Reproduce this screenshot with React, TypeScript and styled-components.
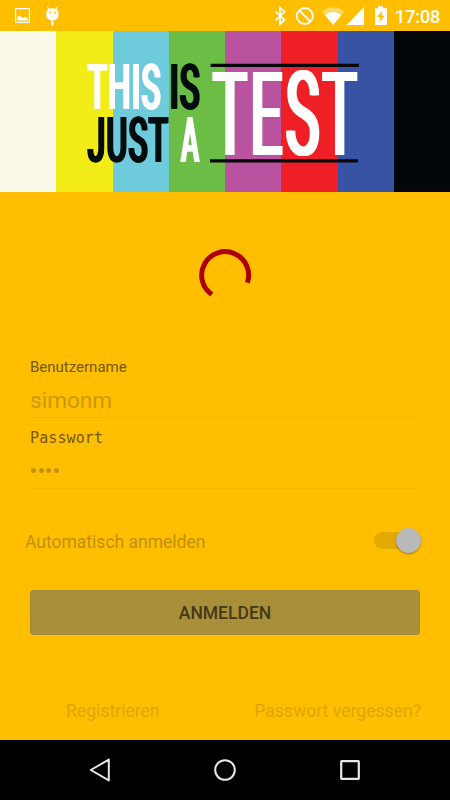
import React from "react";
import styled, { createGlobalStyle } from "styled-components";

const Global = createGlobalStyle`
  * { box-sizing: border-box; }
  body { margin: 0; background: #ffbf00; font-family: Roboto, sans-serif; }
`;

const Screen = styled.div`
  width: 450px;
  height: 800px;
  display: flex;
  flex-direction: column;
  background: #ffbf00;
  overflow: hidden;
`;

const StatusBar = styled.header`
  height: 31px;
  flex: none;
  display: flex;
  justify-content: space-between;

  svg { display: block; }
`;

const StatusGroup = styled.div`
  display: flex;
`;

const Clock = styled.span`
  width: 55px;
  padding-top: 1px;
  font-size: 18px;
  line-height: 31px;
  font-weight: 500;
  color: #fff;
  letter-spacing: -0.1px;
`;

const Banner = styled.div`
  position: relative;
  height: 161px;
  flex: none;
  display: flex;
`;

const Stripe = styled.div<{ $color: string }>`
  flex: 1;
  background: ${(p) => p.$color};
`;

const Lettering = styled.svg`
  position: absolute;
  inset: 0;
  font-family: Roboto, sans-serif;
`;

const Loading = styled.div`
  height: 166px;
  flex: none;
  display: flex;
  justify-content: center;
  padding-top: 53px;
`;

const Form = styled.main`
  flex: 1;
  display: flex;
  flex-direction: column;
  padding: 0 30px;
`;

const Label = styled.label<{ $mono?: boolean }>`
  height: 18px;
  line-height: 18px;
  font-size: 15px;
  color: #735708;
  font-family: ${(p) => (p.$mono ? '"DejaVu Sans Mono", monospace' : "Roboto, sans-serif")};
  letter-spacing: ${(p) => (p.$mono ? 0.1 : 0)}px;
`;

const Field = styled.div`
  height: 42px;
  display: flex;
  align-items: center;
  padding-top: 8px;
  margin-bottom: 11px;
  border-bottom: 1px solid #f4b500;
  font-size: 22.6px;
  color: #cb9805;
`;

const Dots = styled.div`
  display: flex;
  gap: 2.5px;
  padding: 0 0 2px 1.3px;
`;

const Dot = styled.i`
  width: 5px;
  height: 5px;
  border-radius: 50%;
  background: #c39205;
`;

const SwitchRow = styled.div`
  display: flex;
  align-items: center;
  justify-content: space-between;
  height: 28px;
  margin: 27px -1px 0 -5px;
  padding-bottom: 1px;
  font-size: 17.5px;
  color: #bf8f06;
`;

const SwitchLabel = styled.span`
  padding-top: 3px;
`;

const Track = styled.span`
  width: 47px;
  height: 17px;
  border-radius: 9px;
  background: #e3aa03;
  display: flex;
  align-items: center;
  justify-content: flex-end;
`;

const Thumb = styled.span`
  width: 25px;
  height: 25px;
  flex: none;
  border-radius: 50%;
  background: #b9b9b9;
  box-shadow: 0 1px 2px rgba(90, 60, 0, 0.55);
`;

const SubmitButton = styled.button`
  margin-top: 35px;
  height: 45px;
  padding: 1px 0 0;
  border: 1px solid #a38a3a;
  border-radius: 3px;
  background: #aa8f3b;
  color: #443917;
  font: 500 17.5px Roboto, sans-serif;
`;

const Links = styled.div`
  display: flex;
  justify-content: space-between;
  margin: 65px -1px 0 36px;
  font-size: 17.6px;
  line-height: 22px;
  color: #dea604;
`;

const NavBar = styled.nav`
  height: 60px;
  flex: none;
  display: flex;
  justify-content: space-between;
  align-items: center;
  padding: 0 85px;
  background: #000;
`;

const stripes = ["#fbfaea", "#f4ec19", "#6dcbdc", "#6cbd45", "#b9529f", "#ee2025", "#3953a4", "#020608"];

interface WordProps {
  text: string;
  x: number;
  baseline: number;
  width: number;
  cap: number;
  color: string;
  filter: string;
  spacing?: number;
  weight?: number;
}

/* Roboto capitals are 0.711em tall; the width is squeezed to the given length. */
const Word = ({ text, x, baseline, width, cap, color, filter, spacing = 0, weight = 500 }: WordProps) => (
  <text
    x={x}
    y={baseline}
    fontSize={cap / 0.711}
    fontWeight={weight}
    letterSpacing={spacing}
    fill={color}
    textLength={width}
    lengthAdjust="spacingAndGlyphs"
    filter={`url(#${filter})`}
  >
    {text}
  </text>
);

/* Thickens the stems sideways and leaves the crossbars as they are. */
const Widen = ({ id, by }: { id: string; by: number }) => (
  <filter id={id} x="-10%" y="-10%" width="120%" height="120%">
    <feOffset in="SourceGraphic" dx={-by} result="left" />
    <feOffset in="SourceGraphic" dx={by} result="right" />
    <feMerge>
      <feMergeNode in="left" />
      <feMergeNode in="right" />
      <feMergeNode in="SourceGraphic" />
    </feMerge>
  </filter>
);

export default function App() {
  return (
    <Screen>
      <Global />
      <StatusBar>
        <svg width="70" height="31" viewBox="0 0 70 31" fill="#fff">
          <rect x="15.6" y="8.6" width="13.8" height="13.8" fill="none" stroke="#fff" strokeWidth="1.2" />
          <path d="M17 20.5V17.5L19.5 15.5L22.5 18L25 16.8L28 19V20.5Z" />
          <path d="M47.6 6.2L49.6 9A6 6 0 0 1 55.2 9L57.2 6.2L57.8 6.7L56.7 9.8A6.3 6.3 0 1 1 48.1 9.8L47 6.7Z" />
          <rect x="51.4" y="21" width="2" height="4.8" rx=".8" />
          <circle cx="50" cy="12.5" r=".9" fill="#ffbf00" />
          <circle cx="54.8" cy="12.5" r=".9" fill="#ffbf00" />
        </svg>
        <StatusGroup>
          <svg width="130" height="31" viewBox="265 0 130 31" fill="#fff">
            <path d="M275.5 11.5L284.5 20L280 24V7.5L284.5 11.8L275.5 20.3" fill="none" stroke="#fff" strokeWidth="1.7" />
            <circle cx="304.8" cy="16" r="8" fill="none" stroke="#fff" strokeWidth="1.8" />
            <path d="M299.3 10.3L310.4 21.6" stroke="#fff" strokeWidth="1.8" />
            <path d="M322 11.5Q333 3 344.5 11.5L333.2 25Z" opacity=".4" />
            <path d="M325.2 15Q333 9 341.2 15L333.2 25Z" />
            <path d="M364 7V25H346.5Z" />
            <path d="M375 8.3H378V6.2H383V8.3H387V25H375Z" />
            <path d="M382.5 10.5L376.8 17H380.3L379.4 22L385 15.5H381.5Z" fill="#ffbf00" />
          </svg>
          <Clock>17:08</Clock>
        </StatusGroup>
      </StatusBar>
      <Banner>
        {stripes.map((color) => (
          <Stripe key={color} $color={color} />
        ))}
        <Lettering width="450" height="161" viewBox="0 31 450 161">
          <Widen id="widen-small" by={1} />
          <Widen id="widen-large" by={2} />
          <Word text="THIS" x={87.5} baseline={109} width={74} cap={45} color="#fff" filter="widen-small" spacing={1.5} />
          <Word text="IS" x={169.5} baseline={109} width={31} cap={45} color="#050708" filter="widen-small" spacing={1} />
          <Word text="JUST" x={87.5} baseline={162.3} width={81.5} cap={44.5} color="#050708" filter="widen-small" spacing={1.5} />
          <Word text="A" x={181} baseline={162} width={18} cap={44.5} color="#fff" filter="widen-small" />
          <Word text="TEST" x={213} baseline={154.8} width={147} cap={82.5} color="#fff" filter="widen-large" spacing={7} weight={400} />
          <path d="M210.6 65.4H359M210 160.8H358" stroke="#050708" strokeWidth="3.2" />
        </Lettering>
      </Banner>
      <Loading>
        <svg width="60" height="60" viewBox="-30 -30 60 60">
          <path d="M-13.2 19.5A23.5 23.5 0 1 1 22.4 7.7" fill="none" stroke="#ad0000" strokeWidth="5" />
        </svg>
      </Loading>
      <Form>
        <Label>Benutzername</Label>
        <Field>simonm</Field>
        <Label $mono>Passwort</Label>
        <Field>
          <Dots>
            <Dot />
            <Dot />
            <Dot />
            <Dot />
          </Dots>
        </Field>
        <SwitchRow>
          <SwitchLabel>Automatisch anmelden</SwitchLabel>
          <Track>
            <Thumb />
          </Track>
        </SwitchRow>
        <SubmitButton>ANMELDEN</SubmitButton>
        <Links>
          <span>Registrieren</span>
          <span>Passwort vergessen?</span>
        </Links>
      </Form>
      <NavBar>
        <svg width="30" height="30" viewBox="85 755 30 30">
          <path d="M90.8 770L108.8 759.6V780.4Z" fill="none" stroke="#e8e8e8" strokeWidth="2" strokeLinejoin="round" />
        </svg>
        <svg width="30" height="30" viewBox="210 755 30 30">
          <circle cx="225" cy="770" r="9.8" fill="none" stroke="#e8e8e8" strokeWidth="2" />
        </svg>
        <svg width="30" height="30" viewBox="335 755 30 30">
          <rect x="341.2" y="761.2" width="17.6" height="17.6" rx=".5" fill="none" stroke="#e8e8e8" strokeWidth="2.2" />
        </svg>
      </NavBar>
    </Screen>
  );
}
